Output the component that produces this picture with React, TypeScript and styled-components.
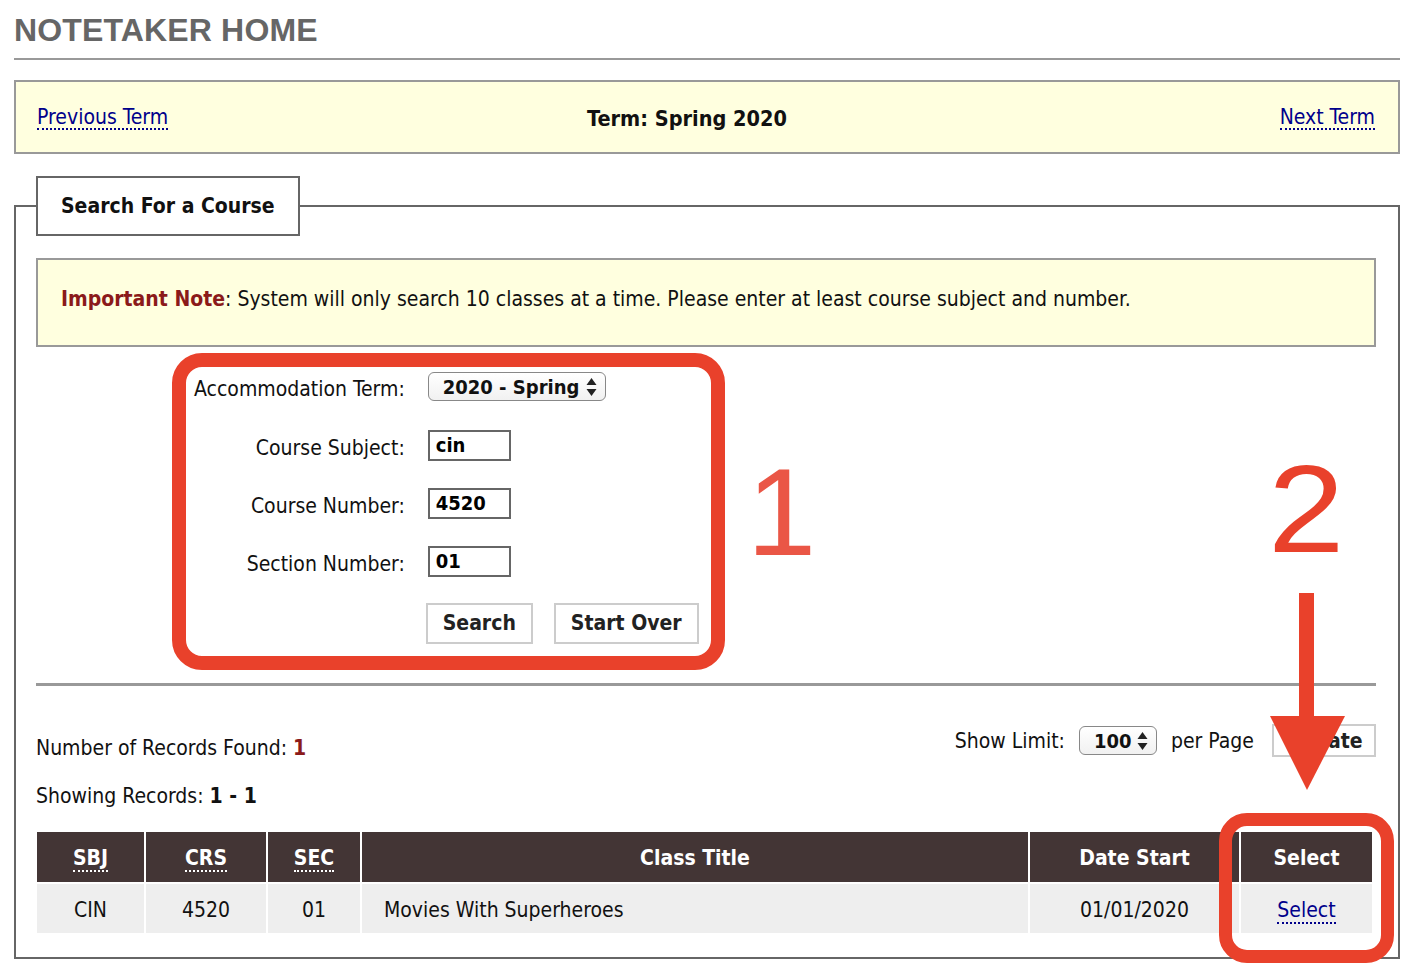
import { createGlobalStyle, styled } from 'styled-components';

const GlobalStyle = createGlobalStyle`
    body {
        margin: 0;
        background: #fff;
        color: #111;
        font-family: "DejaVu Sans Condensed", "DejaVu Sans", sans-serif;
        font-size: 21px;
    }
`;

const RED = '#e9412b';

const Page = styled.div`
    position: relative;
    width: 1414px;
    box-sizing: border-box;
    padding: 0 14px 16px;
`;

const Title = styled.h1`
    margin: 0;
    padding: 12px 0 10px;
    font: bold 32px/36px 'Liberation Sans', Arial, sans-serif;
    letter-spacing: 0.15px;
    color: #666;
    border-bottom: 2px solid #999;
`;

const TermBar = styled.div`
    margin-top: 20px;
    height: 68px;
    display: grid;
    grid-template-columns: 1fr auto 1fr;
    align-items: center;
    padding: 2px 23px 0 21px;
    background: #ffffdf;
    border: 2px solid #999;
`;

const TermLabel = styled.div`
    font-weight: bold;
    font-size: 21.5px;
    margin-right: 38px;
`;

const Link = styled.a<{ $align?: string }>`
    justify-self: ${(p) => p.$align || 'start'};
    color: #00008b;
    text-decoration: none;
    border-bottom: 2px dotted #00008b;
    line-height: 22px;
    cursor: pointer;
`;

const Fieldset = styled.fieldset`
    margin: 22px 0 0;
    padding: 0 22px 22px 20px;
    border: 2px solid #666;
    min-width: 0;
`;

const Legend = styled.legend`
    margin: 0;
    padding: 0 23px;
    height: 56px;
    line-height: 56px;
    border: 2px solid #666;
    background: #fff;
    font-weight: bold;
    font-size: 21px;
`;

const Note = styled.div`
    margin-top: 22px;
    height: 89px;
    display: flex;
    align-items: center;
    padding: 0 23px 8px;
    box-sizing: border-box;
    background: #ffffdf;
    border: 2px solid #999;
`;

const NoteTitle = styled.strong`
    color: #8b1a1a;
`;

const FormRow = styled.div`
    display: flex;
    align-items: center;
    margin: 6px 0 0 136px;
`;

const Highlight = styled.div`
    border: 14px solid ${RED};
    border-radius: 30px;
    padding: 0 12px 0 8px;
`;

const FormGrid = styled.div`
    display: grid;
    grid-template-columns: auto auto;
    grid-template-rows: 49px 58px 58px 58px 66px;
    column-gap: 23px;
    align-items: center;
`;

const Label = styled.label<{ $top?: boolean }>`
    text-align: right;
    align-self: ${(p) => (p.$top ? 'start' : 'center')};
    margin-top: ${(p) => (p.$top ? '10px' : '6px')};
`;

const FakeSelect = styled.div<{ $width: number; $top?: boolean }>`
    display: inline-flex;
    align-items: center;
    justify-content: space-between;
    box-sizing: border-box;
    width: ${(p) => p.$width}px;
    height: 29px;
    padding: 0 8px 0 14px;
    border: 1.5px solid #888;
    border-radius: 6px;
    background: linear-gradient(#ffffff, #f1f1f1);
    font-weight: bold;
    font-size: 20px;
    align-self: ${(p) => (p.$top ? 'start' : 'center')};
    margin-top: ${(p) => (p.$top ? '5px' : '0')};
    justify-self: start;
`;

const TextInput = styled.input`
    width: 83px;
    height: 31px;
    box-sizing: border-box;
    padding: 0 6px;
    border: 2px solid #666;
    font: bold 20px "DejaVu Sans Condensed", "DejaVu Sans", sans-serif;
    color: #000;
    outline: none;
`;

const Buttons = styled.div`
    grid-column: 2;
    display: flex;
    gap: 21px;
    margin-left: -2px;
`;

const Button = styled.button<{ $width: number }>`
    width: ${(p) => p.$width}px;
    height: 41px;
    background: #fff;
    border: 2px solid #ccc;
    font: bold 21px "DejaVu Sans Condensed", "DejaVu Sans", sans-serif;
    color: #222;
    padding: 0;
`;

const BigNumber = styled.div<{ $color: string }>`
    font: 125px/1 'Liberation Sans', Arial, sans-serif;
    color: ${(p) => p.$color};
`;

const One = styled(BigNumber)`
    margin-left: 22px;
`;

const Two = styled(BigNumber)`
    position: absolute;
    left: 1268px;
    top: 446px;
    transform: scaleX(1.1);
    transform-origin: left center;
`;

const Arrow = styled.svg`
    position: absolute;
    left: 1268px;
    top: 593px;
`;

const SelectRing = styled.div`
    position: absolute;
    left: 1219px;
    top: 813px;
    width: 175px;
    height: 150px;
    box-sizing: border-box;
    border: 13px solid ${RED};
    border-radius: 28px;
`;

const Divider = styled.div`
    margin-top: 13px;
    border-top: 3px solid #999;
`;

const Records = styled.div`
    margin-top: 38px;
    display: flex;
    justify-content: space-between;
    align-items: flex-start;
`;

const RecordLine = styled.div`
    line-height: 48px;
`;

const Accent = styled.strong`
    color: #8b1a1a;
`;

const LimitRow = styled.div`
    display: flex;
    align-items: center;
    height: 33px;
    gap: 14px;
`;

const UpdateButton = styled(Button)`
    height: 33px;
    margin-left: 4px;
    margin-right: 0;
`;

const Table = styled.table`
    margin: 10px 0 0 -1px;
    border-spacing: 2px;
    table-layout: fixed;
    width: 1339px;
`;

const Th = styled.th<{ $width: number }>`
    width: ${(p) => p.$width}px;
    height: 48px;
    padding: 2px 0 0;
    background: #433535;
    color: #fff;
    font-size: 21px;
    text-align: center;
`;

const Abbr = styled.abbr`
    text-decoration: none;
    border-bottom: 2px dotted #fff;
    line-height: 22px;
`;

const Td = styled.td<{ $left?: boolean }>`
    height: 47px;
    padding: 2px ${(p) => (p.$left ? '22px' : '0')} 0;
    background: #eee;
    text-align: ${(p) => (p.$left ? 'left' : 'center')};
`;

const SelectArrows = () => (
    <svg width="11" height="20" viewBox="0 0 11 20">
        <path d="M5.5 1 L10.5 8 L0.5 8 Z" fill="#222" />
        <path d="M5.5 19 L10.5 12 L0.5 12 Z" fill="#222" />
    </svg>
);

export default function App() {
    return (
        <Page>
            <GlobalStyle />
            <Title>NOTETAKER HOME</Title>

            <TermBar>
                <Link href="#">Previous Term</Link>
                <TermLabel>Term: Spring 2020</TermLabel>
                <Link href="#" $align="end">
                    Next Term
                </Link>
            </TermBar>

            <Fieldset>
                <Legend>Search For a Course</Legend>

                <Note>
                    <span>
                        <NoteTitle>Important Note</NoteTitle>: System will only
                        search 10 classes at a time. Please enter at least
                        course subject and number.
                    </span>
                </Note>

                <FormRow>
                    <Highlight>
                        <FormGrid>
                            <Label $top>Accommodation Term:</Label>
                            <FakeSelect $width={178} $top>
                                2020 - Spring
                                <SelectArrows />
                            </FakeSelect>

                            <Label>Course Subject:</Label>
                            <TextInput readOnly value="cin" />

                            <Label>Course Number:</Label>
                            <TextInput readOnly value="4520" />

                            <Label>Section Number:</Label>
                            <TextInput readOnly value="01" />

                            <Buttons>
                                <Button $width={107}>Search</Button>
                                <Button $width={145}>Start Over</Button>
                            </Buttons>
                        </FormGrid>
                    </Highlight>
                    <One $color="#ea5646">1</One>
                </FormRow>

                <Divider />

                <Records>
                    <div>
                        <RecordLine>
                            Number of Records Found: <Accent>1</Accent>
                        </RecordLine>
                        <RecordLine>
                            Showing Records: <strong>1 - 1</strong>
                        </RecordLine>
                    </div>
                    <LimitRow>
                        <span>Show Limit:</span>
                        <FakeSelect $width={78}>
                            100
                            <SelectArrows />
                        </FakeSelect>
                        <span>per Page</span>
                        <UpdateButton $width={104}>Update</UpdateButton>
                    </LimitRow>
                </Records>

                <Table>
                    <thead>
                        <tr>
                            <Th $width={107}>
                                <Abbr title="Subject">SBJ</Abbr>
                            </Th>
                            <Th $width={120}>
                                <Abbr title="Course">CRS</Abbr>
                            </Th>
                            <Th $width={92}>
                                <Abbr title="Section">SEC</Abbr>
                            </Th>
                            <Th $width={666}>Class Title</Th>
                            <Th $width={209}>Date Start</Th>
                            <Th $width={131}>Select</Th>
                        </tr>
                    </thead>
                    <tbody>
                        <tr>
                            <Td>CIN</Td>
                            <Td>4520</Td>
                            <Td>01</Td>
                            <Td $left>Movies With Superheroes</Td>
                            <Td>01/01/2020</Td>
                            <Td>
                                <Link href="#">Select</Link>
                            </Td>
                        </tr>
                    </tbody>
                </Table>
            </Fieldset>

            <Two $color={RED}>2</Two>
            <Arrow width="80" height="200" viewBox="0 0 80 200">
                <rect x="31" y="0" width="15" height="124" fill={RED} />
                <path d="M2 123 L77 123 L39 197 Z" fill={RED} />
            </Arrow>
            <SelectRing />
        </Page>
    );
}
